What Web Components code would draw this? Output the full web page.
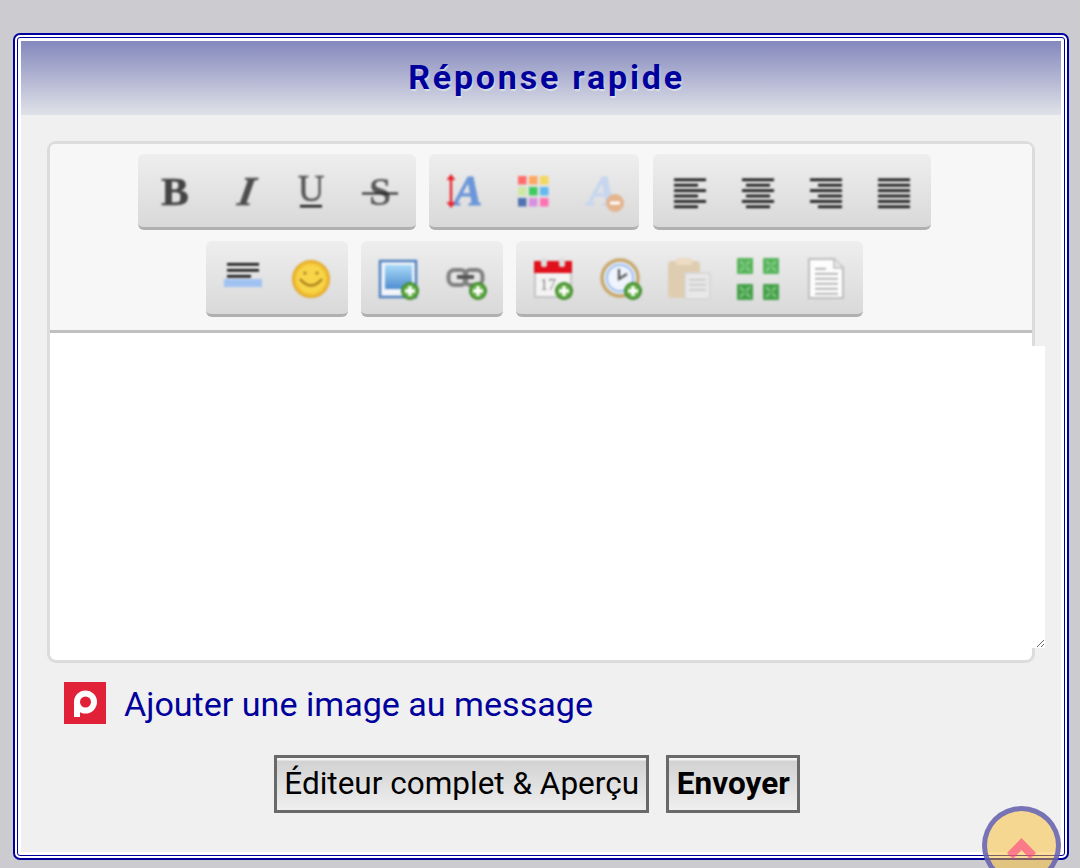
<!DOCTYPE html>
<html lang="fr">
<head>
<meta charset="utf-8">
<title>Réponse rapide</title>
<style>
    html, body { margin: 0; height: 100%; }
    body { background: #cbcbd0; font-family: Roboto, "Liberation Sans", sans-serif; overflow: hidden; }
</style>
</head>
<body>
<quick-reply>
    <editor-toolbar slot="editor"></editor-toolbar>
</quick-reply>
<scroll-top></scroll-top>

<script>
// Petits dessins reutilises : badge vert "+" et texte serif des boutons
const plus = (x, y) => `
    <circle cx="${x}" cy="${y}" r="9" fill="#3f8a2a"/>
    <circle cx="${x}" cy="${y}" r="7" fill="#62ad45"/>
    <path d="M${x - 5} ${y}h10M${x} ${y - 5}v10" stroke="#fff" stroke-width="3.4"/>`;

const serif = (ch, x, y, size, attrs) =>
    `<text x="${x}" y="${y}" font-family="Liberation Serif" font-size="${size}" text-anchor="middle" ${attrs}>${ch}</text>`;

const lines = (rows, h = 2.6, color = "#111") =>
    rows.map(([x, y, w]) => `<rect x="${x}" y="${y}" width="${w}" height="${h}" fill="${color}"/>`).join("");

const alignRows = (mode) => [0, 1, 2, 3, 4, 5].map((i) => {
    const w = mode === "justify" || i % 2 === 0 ? 32 : 24;
    const x = mode === "left" ? 8 : mode === "right" ? 40 - w : 24 - w / 2;
    return [x, 10.5 + i * 5.4, w];
});

const ICONS = {
    bold: serif("B", 24, 37, 41, 'font-weight="700" fill="#444" stroke="#444" stroke-width="0.6"'),
    italic: `<g transform="translate(7 0) skewX(-10)">${serif("I", 25, 37, 41, 'font-weight="700" font-style="italic" fill="#4c4c4c" stroke="#4c4c4c" stroke-width="0.6"')}</g>`,
    underline: serif("U", 24, 33, 37, 'fill="#555" stroke="#555" stroke-width="0.4"') + `<rect x="13" y="37" width="22" height="2.4" fill="#111"/>`,
    strike: serif("S", 25, 37, 40, 'font-weight="700" fill="#555"') + `<path d="M7 25.500H43" stroke="#222" stroke-width="2"/>`,
    fontsize: `${serif("A", 26, 37, 43, 'font-weight="700" font-style="italic" fill="#6c96da" stroke="#6c96da" stroke-width="0.8"')}
        <path d="M9 9V37" stroke="#e8242c" stroke-width="2.400"/>
        <path d="M4.500 12 9 6l4.500 6zM4.500 34 9 40l4.500-6z" fill="#e8242c"/>`,
    palette: [
        "#ff6b6b", "#ffa562", "#f4d760",
        "#cde8a2", "#3fcb62", "#62b8f0",
        "#5072b0", "#d890e0", "#ff72b2",
    ].map((c, i) => `<rect x="${8 + (i % 3) * 11}" y="${8 + Math.floor(i / 3) * 11}" width="8.500" height="8.500" fill="${c}"/>`).join(""),
    clearfont: `${serif("A", 24, 37, 43, 'font-weight="700" font-style="italic" fill="#c6d6ee" stroke="#c6d6ee" stroke-width="0.8"')}
        <circle cx="37" cy="35" r="9" fill="#e4b48e"/>
        <rect x="32" y="33.500" width="10" height="3" fill="#fff"/>`,
    left: lines(alignRows("left")),
    center: lines(alignRows("center")),
    right: lines(alignRows("right")),
    justify: lines(alignRows("justify")),
    quote: `${lines([[8, 8, 32], [8, 14, 32], [8, 20, 24]])}<rect x="5" y="24" width="38" height="8" fill="#a0c2f2"/>`,
    smiley: `<circle cx="24" cy="24" r="18" fill="#f2c232" stroke="#e2aa2c" stroke-width="2"/>
        <circle cx="24" cy="24" r="14.500" fill="#f7d448"/>
        <circle cx="18" cy="18" r="1.600" fill="#a8821c"/><circle cx="30" cy="18" r="1.600" fill="#a8821c"/>
        <path d="M13 24q11 13 22 0" fill="none" stroke="#a8821c" stroke-width="2.400"/>`,
    image: `<defs><linearGradient id="sky" x1="0" y1="0" x2="0" y2="1"><stop offset="0" stop-color="#a8daf8"/><stop offset="1" stop-color="#4e8ed0"/></linearGradient></defs>
        <rect x="6" y="6" width="36" height="36" fill="#f2f4f8" stroke="#5080c0" stroke-width="2.500"/>
        <rect x="11" y="10" width="27" height="24" fill="url(#sky)"/>${plus(36, 36)}`,
    link: `<rect x="6.500" y="15" width="18" height="15" rx="6" fill="none" stroke="#808080" stroke-width="4"/>
        <rect x="22.500" y="15" width="18" height="15" rx="6" fill="none" stroke="#808080" stroke-width="4"/>
        <rect x="15" y="20" width="17" height="4" fill="#555"/>${plus(36, 36)}`,
    calendar: `<rect x="6" y="16" width="36" height="26" fill="#f4f4f4" stroke="#b8b8b8" stroke-width="1.500"/>
        <rect x="5" y="6" width="38" height="12" fill="#e0101c"/>
        <rect x="12" y="3" width="6" height="9" rx="2" fill="#ddd"/><rect x="30" y="3" width="6" height="9" rx="2" fill="#ddd"/>
        ${serif("17", 19, 35, 16, 'fill="#888"')}${plus(35, 36)}`,
    clock: `<circle cx="23" cy="23" r="18" fill="#dde8fa" stroke="#c8a86a" stroke-width="3.500"/>
        <circle cx="23" cy="23" r="13" fill="#eef3fc" stroke="#90b4e8" stroke-width="1.500"/>
        <path d="M22 14v10l8-5" fill="none" stroke="#555" stroke-width="2.200"/>${plus(36, 36)}`,
    paste: `<rect x="3" y="6" width="32" height="37" rx="4" fill="#dfcdb2"/>
        <rect x="11" y="3" width="16" height="7" rx="2" fill="#ecdcc4"/>
        <rect x="20" y="18" width="25" height="26" fill="#e8e8e8" stroke="#d4d4d4" stroke-width="1.500"/>
        ${lines([[24, 24, 17], [24, 29, 17], [24, 34, 17]], 1.500, "#c4c4c4")}`,
    fullscreen: [[4, 3], [30, 3], [4, 29], [30, 29]].map(([x, y], i) => `
        <rect x="${x}" y="${y}" width="16" height="16" rx="1" fill="${i > 1 ? "#45a24a" : "#58b55c"}"/>
        <path d="M${x + 3} ${y + 3}l4 4M${x + 13} ${y + 3}l-4 4M${x + 3} ${y + 13}l4 -4M${x + 13} ${y + 13}l-4 -4" stroke="#9ed49e" stroke-width="1.400"/>`).join(""),
    doc: `<path d="M8 4H33L42 13V43H8Z" fill="#fdfdfd" stroke="#bcbcbc" stroke-width="2"/>
        <path d="M33 4V13H42" fill="#e8e8e8" stroke="#bcbcbc" stroke-width="1.500"/>
        ${lines([[14, 13, 11], [14, 18, 23], [14, 23, 23], [14, 28, 23], [14, 33, 23], [14, 38, 23]], 1.500, "#a0a0a0")}`,
};

const TOOLBAR = [
    [["bold", "italic", "underline", "strike"], ["fontsize", "palette", "clearfont"], ["left", "center", "right", "justify"]],
    [["quote", "smiley"], ["image", "link"], ["calendar", "clock", "paste", "fullscreen", "doc"]],
];

// Barre d'outils de l'editeur
class EditorToolbar extends HTMLElement {
    constructor() {
        super();
        const groups = TOOLBAR.map((row) => `
            <div class="row">
                ${row.map((group) => `
                    <div class="group">
                        ${group.map((name) => `<button type="button" aria-label="${name}"><svg width="48" height="48" viewBox="0 0 48 48">${ICONS[name]}</svg></button>`).join("")}
                    </div>`).join("")}
            </div>`).join("");
        this.attachShadow({ mode: "open" }).innerHTML = `
            <style>
                :host { display: flex; flex-direction: column; gap: 11px; padding: 10px 0 13px; background: #f7f7f7; border-bottom: 3px solid #c0c0c0; border-radius: 5px 5px 0 0; }
                .row { display: flex; justify-content: center; }
                .group { display: flex; padding: 0 3px; margin-right: 13.2px; height: 73px; border-bottom: 3px solid #b0b0b0; border-radius: 6px; background: linear-gradient(#eeeeee, #d9d9d9); }
                .row:last-child .group:last-child { margin-left: -1px; margin-right: 13.2px; padding-right: 4px; }
                button { width: 68px; padding: 0; border: 0; background: none; display: flex; align-items: center; justify-content: center; }
                svg { display: block; filter: blur(0.85px); margin-top: 2px; }
            </style>
            ${groups}`;
    }
}
customElements.define("editor-toolbar", EditorToolbar);

// Panneau "Reponse rapide"
class QuickReply extends HTMLElement {
    constructor() {
        super();
        this.attachShadow({ mode: "open" }).innerHTML = `
            <style>
                :host { display: block; width: 1056px; box-sizing: border-box; margin: 33px 0 0 13px; padding: 2px; background: #fff; border: 2px solid #00009c; border-radius: 7px; }
                .inner { border: 1px solid #00009c; border-radius: 3px; padding: 3px; background: #fff; }
                h2 { margin: 0; height: 72px; padding: 0 0 2px 11px; display: flex; align-items: center; justify-content: center; background: linear-gradient(#8488bd, #e0e2e8); color: #00009c; font: 700 34px Roboto, sans-serif; letter-spacing: 2.8px; text-shadow: 1px 2px 1px rgba(255, 255, 255, 0.45); }
                .content { background: #f0f0f0; padding: 26px 26px 39px; }
                .editor { border: 3px solid #dcdcdc; border-radius: 9px; background: #fff; }
                .area { padding: 13px 0 12px; height: 302px; }
                textarea { display: block; width: 995px; height: 302px; box-sizing: border-box; margin: 0; padding: 0; border: 0; outline: 0; background: #fff; resize: both; }
                .attach { display: flex; align-items: center; gap: 18px; margin: 19px 0 0 17px; height: 42px; color: #00009c; font-size: 34.1px; }
                .attach span { padding-top: 1px; }
                .attach svg { display: block; }
                .actions { display: flex; justify-content: center; gap: 17px; margin-top: 31px; padding-right: 8px; }
                .actions button { height: 58px; box-sizing: border-box; padding: 0 7.4px 2px; border: 3px solid #696969; background: linear-gradient(#f4f4f4 0, #f4f4f4 2px, #d2d2d2 3px, #efefef 100%); color: #000; font: 400 31.5px Roboto, sans-serif; }
                .actions button.primary { font-weight: 700; }
            </style>
            <div class="inner">
                <h2>Réponse rapide</h2>
                <div class="content">
                    <div class="editor">
                        <slot name="editor"></slot>
                        <div class="area"><textarea aria-label="Message"></textarea></div>
                    </div>
                    <div class="attach">
                        <svg width="42" height="42" viewBox="0 0 42 42">
                            <rect width="42" height="42" fill="#e02138"/>
                            <circle cx="21.500" cy="20" r="8.500" fill="none" stroke="#fff" stroke-width="6"/>
                            <rect x="10" y="20" width="6" height="15" fill="#fff"/>
                        </svg>
                        <span>Ajouter une image au message</span>
                    </div>
                    <div class="actions">
                        <button type="button">Éditeur complet &amp; Aperçu</button>
                        <button type="button" class="primary">Envoyer</button>
                    </div>
                </div>
            </div>`;
    }
}
customElements.define("quick-reply", QuickReply);

// Bouton flottant "haut de page"
class ScrollTop extends HTMLElement {
    constructor() {
        super();
        this.attachShadow({ mode: "open" }).innerHTML = `
            <style>
                :host { position: fixed; left: 982px; top: 806px; width: 79px; height: 79px; box-sizing: border-box; border: 5px solid rgba(88, 90, 190, 0.8); border-radius: 50%; background: rgba(250, 190, 50, 0.5); }
                svg { position: absolute; left: 0; top: 0; }
            </style>
            <svg width="69" height="69" viewBox="0 0 69 69">
                <path d="M34.500 27 49 42l-6 6-8.500-9-8.500 9-6-6z" fill="rgba(255, 60, 130, 0.6)"/>
            </svg>`;
    }
}
customElements.define("scroll-top", ScrollTop);
</script>
</body>
</html>
